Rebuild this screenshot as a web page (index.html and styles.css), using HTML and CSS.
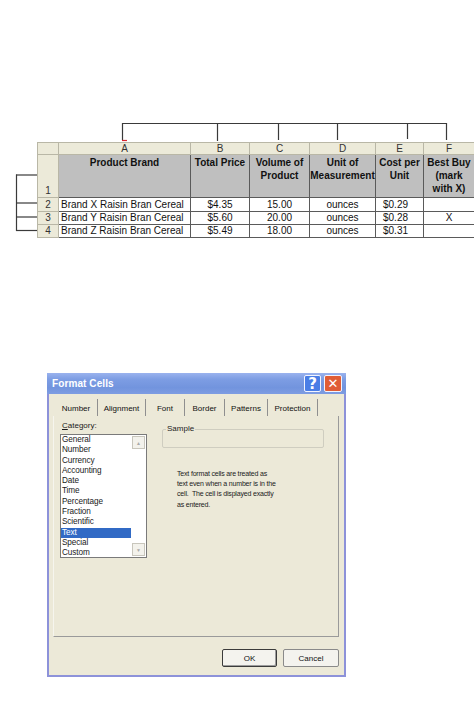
FILE: index.html
```html
<!DOCTYPE html>
<html>
<head>
<meta charset="utf-8">
<title>Format Cells</title>
<link rel="stylesheet" href="styles.css">
</head>
<body>
<div class="page">
  <div class="sheet-wrap">
    <svg class="top-bracket" width="474" height="24" viewBox="0 0 474 24">
      <g stroke="#3a3a3a" stroke-width="1.2" fill="none">
        <line x1="122" y1="5.5" x2="446.5" y2="5.5"/>
        <line x1="122.5" y1="5" x2="122.5" y2="22"/>
        <line x1="217.5" y1="5" x2="217.5" y2="23"/>
        <line x1="278.5" y1="5" x2="278.5" y2="22"/>
        <line x1="337.5" y1="5" x2="337.5" y2="22"/>
        <line x1="407.5" y1="5" x2="407.5" y2="21"/>
        <line x1="446.5" y1="5" x2="446.5" y2="22"/>
      </g>
      <line x1="122" y1="22.5" x2="127" y2="22.5" stroke="#d9262e" stroke-width="1.2"/>
    </svg>
    <div class="sheet-row">
      <svg class="left-bracket" width="37" height="96" viewBox="0 0 37 96">
        <g stroke="#3a3a3a" stroke-width="1.2" fill="none">
          <line x1="16.5" y1="32.5" x2="16.5" y2="89"/>
          <line x1="16" y1="33" x2="37" y2="33"/>
          <line x1="16" y1="61" x2="37" y2="61"/>
          <line x1="16" y1="75" x2="37" y2="75"/>
          <line x1="16" y1="88.5" x2="37" y2="88.5"/>
        </g>
      </svg>
      <table class="sheet">
        <colgroup>
          <col class="c-rn"><col class="c-a"><col class="c-b"><col class="c-c"><col class="c-d"><col class="c-e"><col class="c-f">
        </colgroup>
        <tr class="letters">
          <th class="corner"></th><th>A</th><th>B</th><th>C</th><th>D</th><th>E</th><th>F</th>
        </tr>
        <tr class="head">
          <td class="rn">1</td>
          <th>Product Brand</th>
          <th>Total Price</th>
          <th>Volume of<br>Product</th>
          <th>Unit of<br>Measurement</th>
          <th>Cost per<br>Unit</th>
          <th>Best Buy<br>(mark<br>with X)</th>
        </tr>
        <tr class="data r2">
          <td class="rn">2</td><td class="left">Brand X Raisin Bran Cereal</td><td>$4.35</td><td>15.00</td><td>ounces</td><td class="cost">$0.29</td><td></td>
        </tr>
        <tr class="data r3">
          <td class="rn">3</td><td class="left">Brand Y Raisin Bran Cereal</td><td>$5.60</td><td>20.00</td><td>ounces</td><td class="cost">$0.28</td><td>X</td>
        </tr>
        <tr class="data r4">
          <td class="rn">4</td><td class="left">Brand Z Raisin Bran Cereal</td><td>$5.49</td><td>18.00</td><td>ounces</td><td class="cost">$0.31</td><td></td>
        </tr>
      </table>
    </div>
  </div>

  <div class="dialog">
    <div class="titlebar">
      <span class="title">Format Cells</span>
      <span class="tb-btn help">?</span>
      <span class="tb-btn close">✕</span>
    </div>
    <div class="dialog-body">
      <div class="tabs">
        <span class="tab sel t1">Number</span>
        <span class="tab t2">Alignment</span>
        <span class="tab t3">Font</span>
        <span class="tab t4">Border</span>
        <span class="tab t5">Patterns</span>
        <span class="tab t6">Protection</span>
      </div>
      <div class="pane">
        <div class="left-col">
          <div class="cat-label"><u>C</u>ategory:</div>
          <div class="listbox">
            <ul class="items">
              <li>General</li>
              <li>Number</li>
              <li>Currency</li>
              <li>Accounting</li>
              <li>Date</li>
              <li>Time</li>
              <li>Percentage</li>
              <li>Fraction</li>
              <li>Scientific</li>
              <li class="hl">Text</li>
              <li>Special</li>
              <li>Custom</li>
            </ul>
            <div class="scrollbar">
              <span class="sb-btn">&#9650;</span>
              <span class="sb-track"></span>
              <span class="sb-btn">&#9660;</span>
            </div>
          </div>
        </div>
        <div class="right-col">
          <div class="sample">
            <span class="sample-label">Sample</span>
          </div>
          <p class="desc">Text format cells are treated as<br>text even when a number is in the<br>cell.&nbsp; The cell is displayed exactly<br>as entered.</p>
        </div>
      </div>
      <div class="buttons">
        <span class="btn ok">OK</span>
        <span class="btn cancel">Cancel</span>
      </div>
    </div>
  </div>
</div>
</body>
</html>
```

FILE: styles.css
```css
* { box-sizing: border-box; }
html, body { margin: 0; padding: 0; background: #fff; }
body { width: 474px; height: 722px; overflow: hidden; font-family: "Liberation Sans", Arial, sans-serif; }

.page { display: flex; flex-direction: column; }

.sheet-wrap { margin-top: 118px; display: flex; flex-direction: column; }
.top-bracket { display: block; }
.sheet-row { display: flex; align-items: flex-start; }
.left-bracket { display: block; flex: none; }

.sheet {
  border-collapse: collapse;
  table-layout: fixed;
  width: 437px;
  font-size: 10px;
  color: #111;
  flex: none;
}
.c-rn { width: 21px; }
.c-a { width: 132px; }
.c-b { width: 59px; }
.c-c { width: 60px; }
.c-d { width: 66px; }
.c-e { width: 48px; }
.c-f { width: 51px; }

.sheet td, .sheet th {
  border: 1px solid #5a5a5a;
  padding: 0;
  white-space: nowrap;
  overflow: visible;
  text-align: center;
}
.letters { height: 12px; }
.letters th {
  font-weight: normal;
  line-height: 10px;
  background: #ecead9;
  border-color: #b9b7a6;
  color: #333;
}
.head { height: 43px; }
.head th {
  background: #bfbfbf;
  vertical-align: top;
  line-height: 13px;
  padding-top: 1px;
  font-weight: bold;
  color: #111;
}
.rn {
  background: #ecead9;
  border-color: #b9b7a6 !important;
  color: #333;
  vertical-align: bottom;
  line-height: 12px;
}
.data td { line-height: 12px; }
.r2 { height: 14px; }
.r3 { height: 13px; }
.r4 { height: 13px; }
.sheet td.left { text-align: left; padding-left: 2px; }
.sheet td.cost { text-align: left; padding-left: 7px; }

/* Dialog */
.dialog {
  margin-top: 135px;
  margin-left: 47px;
  width: 299px;
  height: 304px;
  background: #ece9d8;
  border: 2px solid #8d92d9;
  border-top: none;
  display: flex;
  flex-direction: column;
  font-size: 8px;
  color: #1a1a1a;
}
.titlebar {
  height: 21px;
  margin: 0 -2px;
  background: linear-gradient(to bottom, #9ab3ee 0%, #7d9de3 30%, #7294de 70%, #7e9de2 100%);
  display: flex;
  align-items: center;
  padding: 0 4px 0 5px;
  gap: 3px;
  flex: none;
}
.title {
  flex: 1;
  color: #fff;
  font-weight: bold;
  font-size: 10px;
  letter-spacing: 0.1px;
}
.tb-btn {
  width: 17px;
  height: 17px;
  border: 1px solid #f2f4ff;
  border-radius: 2px;
  color: #fff;
  font-weight: bold;
  display: flex;
  align-items: center;
  justify-content: center;
}
.help { background: #4a7ee6; font-size: 15px; font-family: "DejaVu Sans", sans-serif; }
.close { background: #e05d36; font-size: 13px; font-family: "DejaVu Sans", sans-serif; width: 18px; }

.dialog-body {
  flex: 1;
  display: flex;
  flex-direction: column;
  padding: 5px 5px 0 4px;
}
.tabs {
  height: 17px;
  display: flex;
  margin-left: 2px;
  flex: none;
}
.tab {
  display: flex;
  align-items: center;
  justify-content: center;
  border-right: 1px solid #8f8f8f;
  padding-top: 2px;
  color: #111;
}
.t1 { width: 43px; }
.t2 { width: 48px; }
.t3 { width: 39px; }
.t4 { width: 40px; }
.t5 { width: 43px; }
.t6 { width: 50px; }

.pane {
  height: 221px;
  border-right: 1px solid #9a9a9a;
  border-bottom: 1px solid #9a9a9a;
  border-left: 1px solid #f6f5ee;
  display: flex;
  padding: 5px 0 0 6px;
  flex: none;
}
.left-col { width: 87px; display: flex; flex-direction: column; }
.cat-label { height: 13px; line-height: 10px; padding-left: 2px; }
.listbox {
  width: 87px;
  height: 124px;
  border: 1px solid #7a7a7a;
  background: #fff;
  display: flex;
}
.items {
  list-style: none;
  margin: 0;
  padding: 0;
  width: 71px;
}
.items li {
  height: 10.3px;
  line-height: 10.3px;
  padding-left: 1px;
  white-space: nowrap;
  font-size: 8.2px;
  letter-spacing: -0.1px;
}
.items li.hl { background: #316ac5; color: #fff; }
.scrollbar {
  width: 14px;
  margin-left: 1px;
  display: flex;
  flex-direction: column;
  padding: 1px 1px 1px 0;
}
.sb-btn {
  height: 13px;
  border: 1px solid #c8c6bc;
  background: #f3f2ec;
  color: #a9a9a9;
  font-size: 5px;
  display: flex;
  align-items: center;
  justify-content: center;
}
.sb-track { flex: 1; }

.right-col { margin-left: 15px; display: flex; flex-direction: column; }
.sample {
  margin-top: 8px;
  width: 162px;
  height: 19px;
  border: 1px solid #cfcdc0;
  border-radius: 2px;
  position: relative;
}
.sample-label {
  position: absolute;
  left: 3px;
  top: -6px;
  background: #ece9d8;
  padding: 0 1px;
  line-height: 10px;
  color: #222;
}
.desc {
  margin: 21px 0 0 15px;
  font-size: 7px;
  letter-spacing: -0.18px;
  line-height: 10.2px;
  color: #1a1a1a;
  white-space: nowrap;
}

.buttons {
  display: flex;
  justify-content: flex-end;
  gap: 6px;
  margin-top: 12px;
}
.btn {
  height: 18px;
  display: flex;
  align-items: center;
  justify-content: center;
  background: #f4f3ee;
  color: #111;
  border-radius: 2px;
}
.ok { width: 55px; border: 1px solid #3b3b3b; box-shadow: inset -1px -1px 0 #9d9d9d; }
.cancel { width: 56px; border: 1px solid #8a8a8a; }
```
